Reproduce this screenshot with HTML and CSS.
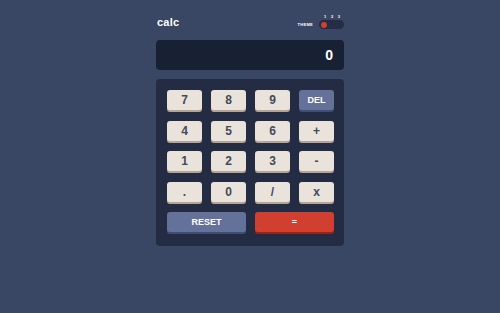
FILE: index.html
```html
<!DOCTYPE html>
<html lang="en">
<head>
<meta charset="UTF-8">
<meta name="viewport" content="width=device-width, initial-scale=1.0">
<title>calc</title>
<link rel="stylesheet" href="styles.css">
</head>
<body>

<div class="calc">
    <!-- header -->
    <div class="top">
        <div class="logo">calc</div>
        <div class="theme">
            <span class="theme-label">THEME</span>
            <div class="switch-box">
                <div class="nums"><span>1</span><span>2</span><span>3</span></div>
                <div class="switch"><div class="dot"></div></div>
            </div>
        </div>
    </div>

    <!-- display -->
    <div class="screen">0</div>

    <!-- keys -->
    <div class="keypad">
        <button class="key">7</button>
        <button class="key">8</button>
        <button class="key">9</button>
        <button class="key blue">DEL</button>
        <button class="key">4</button>
        <button class="key">5</button>
        <button class="key">6</button>
        <button class="key">+</button>
        <button class="key">1</button>
        <button class="key">2</button>
        <button class="key">3</button>
        <button class="key">-</button>
        <button class="key">.</button>
        <button class="key">0</button>
        <button class="key">/</button>
        <button class="key">x</button>
        <button class="key blue wide">RESET</button>
        <button class="key red wide">=</button>
    </div>
</div>

</body>
</html>
```

FILE: styles.css
```css
body {
    margin: 0;
    background: #3a4764;
    font-family: "Liberation Sans", Arial, sans-serif;
    font-weight: bold;
    color: #fff;
}

.calc {
    width: 188px;
    margin: 0 auto;
    padding-top: 12px;
}

/* header */
.top {
    display: flex;
    justify-content: space-between;
    align-items: flex-end;
    height: 17px;
    padding: 0 0 0 1px;
}
.logo {
    font-size: 11px;
    letter-spacing: 0.2px;
    line-height: 13px;
    padding-bottom: 0;
}
.theme {
    display: flex;
    align-items: flex-end;
    gap: 6px;
}
.theme-label {
    font-size: 4px;
    letter-spacing: 0.3px;
    line-height: 6px;
    padding-bottom: 1px;
}
.switch-box {
    width: 25px;
}
.nums {
    display: flex;
    justify-content: space-between;
    padding: 0 4px 0 5px;
    font-size: 4px;
    line-height: 5px;
    margin-bottom: 1px;
}
.switch {
    height: 9px;
    border-radius: 5px;
    background: #242d44;
    padding: 1.5px 2px;
    box-sizing: border-box;
}
.dot {
    width: 6px;
    height: 6px;
    border-radius: 50%;
    background: #d03f2f;
}

/* display */
.screen {
    margin-top: 11px;
    height: 30px;
    border-radius: 4px;
    background: #182034;
    text-align: right;
    padding-right: 11px;
    font-size: 14px;
    line-height: 30px;
}

/* keypad */
.keypad {
    margin-top: 9px;
    background: #232c43;
    border-radius: 4px;
    padding: 11px 10px 14px 11px;
    display: grid;
    grid-template-columns: repeat(4, 35px);
    column-gap: 9px;
    row-gap: 10.5px;
}
.key {
    height: 20px;
    border: none;
    border-radius: 3px;
    background: #eae3dc;
    box-shadow: 0 2px 0 #b4a597;
    color: #434a59;
    font-family: "Liberation Sans", Arial, sans-serif;
    font-weight: bold;
    font-size: 12px;
    padding: 0;
    line-height: 20px;
}
.key.blue {
    background: #647198;
    box-shadow: 0 2px 0 #414e73;
    color: #fff;
    font-size: 9px;
}
.key.red {
    background: #d03f2f;
    box-shadow: 0 2px 0 #93261a;
    color: #fff;
    font-size: 9px;
}
.key.wide {
    grid-column: span 2;
    width: 79px;
}
.key.red.wide {
    justify-self: end;
}
```
